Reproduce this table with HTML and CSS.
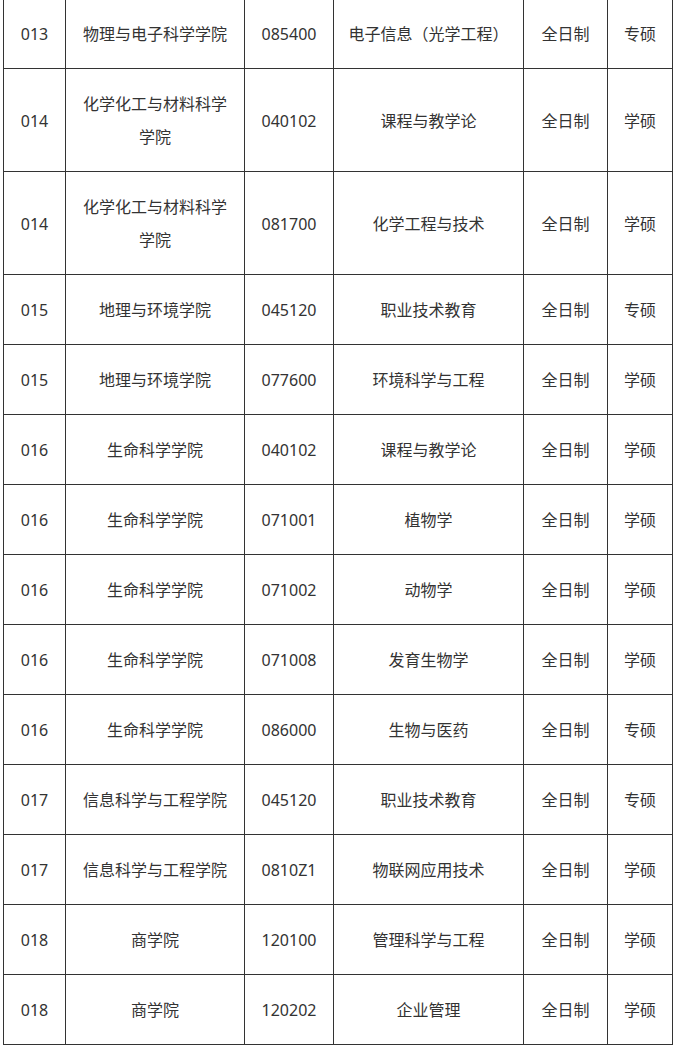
FILE: index.html
```html
<!DOCTYPE html>
<html lang="zh-CN">
<head>
<meta charset="utf-8">
<title>招生专业目录</title>
<link rel="stylesheet" href="styles.css">
</head>
<body>
<table class="grid">
  <colgroup>
    <col class="c-no"><col class="c-school"><col class="c-code"><col class="c-major"><col class="c-mode"><col class="c-type">
  </colgroup>
  <tbody>
    <tr><td>013</td><td>物理与电子科学学院</td><td>085400</td><td>电子信息（光学工程）</td><td>全日制</td><td>专硕</td></tr>
    <tr><td>014</td><td>化学化工与材料科学学院</td><td>040102</td><td>课程与教学论</td><td>全日制</td><td>学硕</td></tr>
    <tr><td>014</td><td>化学化工与材料科学学院</td><td>081700</td><td>化学工程与技术</td><td>全日制</td><td>学硕</td></tr>
    <tr><td>015</td><td>地理与环境学院</td><td>045120</td><td>职业技术教育</td><td>全日制</td><td>专硕</td></tr>
    <tr><td>015</td><td>地理与环境学院</td><td>077600</td><td>环境科学与工程</td><td>全日制</td><td>学硕</td></tr>
    <tr><td>016</td><td>生命科学学院</td><td>040102</td><td>课程与教学论</td><td>全日制</td><td>学硕</td></tr>
    <tr><td>016</td><td>生命科学学院</td><td>071001</td><td>植物学</td><td>全日制</td><td>学硕</td></tr>
    <tr><td>016</td><td>生命科学学院</td><td>071002</td><td>动物学</td><td>全日制</td><td>学硕</td></tr>
    <tr><td>016</td><td>生命科学学院</td><td>071008</td><td>发育生物学</td><td>全日制</td><td>学硕</td></tr>
    <tr><td>016</td><td>生命科学学院</td><td>086000</td><td>生物与医药</td><td>全日制</td><td>专硕</td></tr>
    <tr><td>017</td><td>信息科学与工程学院</td><td>045120</td><td>职业技术教育</td><td>全日制</td><td>专硕</td></tr>
    <tr><td>017</td><td>信息科学与工程学院</td><td>0810Z1</td><td>物联网应用技术</td><td>全日制</td><td>学硕</td></tr>
    <tr><td>018</td><td>商学院</td><td>120100</td><td>管理科学与工程</td><td>全日制</td><td>学硕</td></tr>
    <tr><td>018</td><td>商学院</td><td>120202</td><td>企业管理</td><td>全日制</td><td>学硕</td></tr>
  </tbody>
</table>
</body>
</html>
```
FILE: styles.css
```css
html, body {
  margin: 0;
  padding: 0;
  background: #ffffff;
}
body {
  padding-left: 3px;
  font-family: "Noto Sans", "Noto Sans CJK SC", sans-serif;
  font-size: 16px;
  color: #333333;
}
.grid {
  margin-top: -2px;
  border-collapse: collapse;
  table-layout: fixed;
  width: 670px;
}
.c-no { width: 62px; }
.c-school { width: 179px; }
.c-code { width: 89px; }
.c-major { width: 190px; }
.c-mode { width: 84px; }
.c-type { width: 65px; }
.grid td {
  border: 1px solid #333333;
  padding: 19px 10px 17px;
  line-height: 33px;
  text-align: center;
  vertical-align: middle;
  word-break: break-all;
}
```
